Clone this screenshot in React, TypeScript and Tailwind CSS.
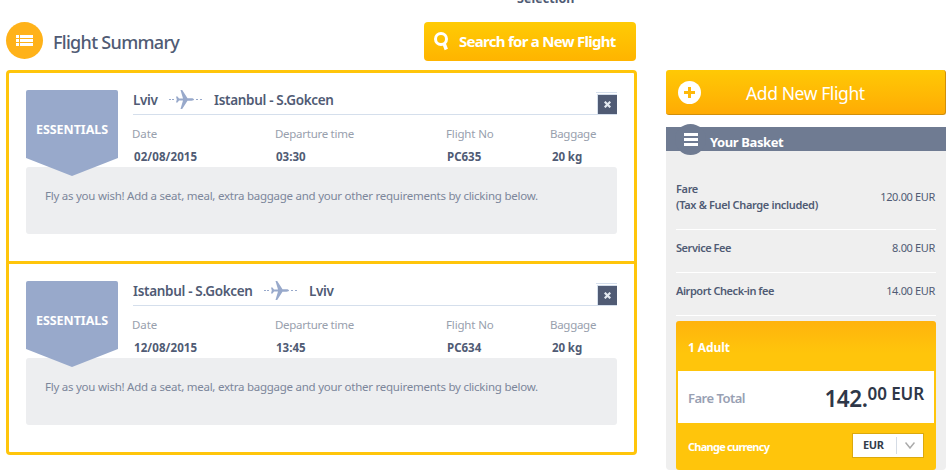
import React from 'react';

interface Flight {
  from: string;
  to: string;
  fromClass: string;
  date: string;
  time: string;
  flightNo: string;
  baggage: string;
}

const flights: Flight[] = [
  {
    from: 'Lviv',
    to: 'Istanbul - S.Gokcen',
    fromClass: 'w-[36px]',
    date: '02/08/2015',
    time: '03:30',
    flightNo: 'PC635',
    baggage: '20 kg',
  },
  {
    from: 'Istanbul - S.Gokcen',
    to: 'Lviv',
    fromClass: 'w-[131px]',
    date: '12/08/2015',
    time: '13:45',
    flightNo: 'PC634',
    baggage: '20 kg',
  },
];

const fees = [
  { label: 'Service Fee', amount: '8.00 EUR' },
  { label: 'Airport Check-in fee', amount: '14.00 EUR' },
];

const PlaneIcon: React.FC = () => (
  <svg width="34" height="20" viewBox="0 0 34 20" className="shrink-0" fill="#98a9cb">
    <path d="M0 9h2v1H0zM3 9h2v1H3zM27 9h2v1h-2zM31 9h2v1h-2z" />
    <path d="M7 6.500h1.500l1.500 2h4L11.500 0h1.700l5.300 8.300h4c1.500 0 2.500.6 2.500 1.200s-1 1.200-2.500 1.200h-4L13.200 19h-1.700L14 10.500h-4l-1.500 2H7l.8-3z" />
  </svg>
);

const Badge: React.FC = () => (
  <div className="absolute left-0 top-0 w-[92px] h-[86px]">
    <svg width="92" height="86" viewBox="0 0 92 86" className="block">
      <path d="M2 0h88a2 2 0 0 1 2 2v66L46 86 0 68V2a2 2 0 0 1 2-2z" fill="#98a9cb" />
    </svg>
    <span className="absolute inset-x-0 top-[30px] text-center text-[12.500px] leading-5 font-bold tracking-[-0.05px] text-white">
      ESSENTIALS
    </span>
  </div>
);

const FlightCard: React.FC<{ flight: Flight }> = ({ flight }) => (
  <div className="relative mx-[17px]">
    <div className="ml-[107px] h-[77px]">
      <div className="flex h-[25px] justify-between border-b border-[#d5dfec] text-[13.500px] leading-5 font-semibold tracking-[-0.32px] text-[#505b74]">
        <div className="flex">
          <span className={`${flight.fromClass} whitespace-nowrap`}>{flight.from}</span>
          <PlaneIcon />
          <span className="ml-[11px]">{flight.to}</span>
        </div>
        <div className="mt-[2px] h-[22px] w-[21px] border-t border-[#d5dfec] pt-px">
          <button className="ml-px flex h-[20px] w-[20px] items-center justify-center border-l border-t border-[#d5dfec] bg-[#505b74] bg-clip-padding">
            <svg width="7" height="7" viewBox="0 0 7 7" stroke="#e4eaf1" strokeWidth="2.200">
              <path d="M.7.7l5.600 5.600M6.300.7L.7 6.300" />
            </svg>
          </button>
        </div>
      </div>
      <div className="-ml-px mt-[9px] grid grid-cols-[143px_171px_104px_66px] text-[11.500px] leading-5 tracking-[-0.28px] text-[#98a0ad]">
        <span className="tracking-[-0.1px]">Date</span>
        <span>Departure time</span>
        <span className="tracking-[-0.15px]">Flight No</span>
        <span>Baggage</span>
      </div>
      <div className="mt-[3px] grid grid-cols-[143px_170px_105px_66px] text-[11.500px] leading-5 font-bold text-[#505b74]">
        <span className="pl-px tracking-[0.1px]">{flight.date}</span>
        <span>{flight.time}</span>
        <span className="pl-px">{flight.flightNo}</span>
        <span className="pl-px tracking-[-0.1px]">{flight.baggage}</span>
      </div>
    </div>
    <div className="h-[67px] rounded-[3px] bg-[#edeef0] pl-[19px] pt-[19px] text-[11.500px] leading-5 tracking-[-0.25px] text-[#7c869b]">
      Fly as you wish! Add a seat, meal, extra baggage and your other requirements by clicking below.
    </div>
    <Badge />
  </div>
);

const Basket: React.FC = () => (
  <section className="mt-[12px] h-[343px] w-[280px] rounded-b-[4px] bg-[#efefef] text-[#505b74]">
    <div className="relative h-6 bg-[#6f7b92]">
      <div className="absolute left-[9px] top-[-3px] flex h-[31px] w-[31px] items-center justify-center rounded-full bg-[#6f7b92]">
        <svg width="14" height="13" viewBox="0 0 14 13" fill="#fff">
          <path d="M0 0h14v3H0zM0 5h14v3H0zM0 10h14v3H0z" />
        </svg>
      </div>
      <h2 className="pl-[44px] pt-[5px] text-[13px] leading-5 font-bold tracking-[-0.4px] text-white">Your Basket</h2>
    </div>
    <div className="mx-[10px] text-[11px] tracking-[-0.35px]">
      <div className="flex h-[79px] items-center justify-between border-b border-white pt-[14px]">
        <div className="leading-4 font-semibold">
          Fare
          <br />
          (Tax &amp; Fuel Charge included)
        </div>
        <span className="pr-px">120.00 EUR</span>
      </div>
      {fees.map((fee) => (
        <div key={fee.label} className="flex h-[43px] items-center justify-between border-b border-white pb-[5px]">
          <span className="font-semibold tracking-[-0.45px]">{fee.label}</span>
          <span className="pr-px">{fee.amount}</span>
        </div>
      ))}
      <div className="mt-[5px] h-[149px] rounded-[3px] bg-linear-to-b from-[#ffb30d] to-[#ffc50b] to-[32px] px-[2px]">
        <div className="h-[50px] pl-[10px] pt-[17px] text-[12px] leading-5 font-bold tracking-[-0.1px] text-white">1 Adult</div>
        <div className="flex h-[52px] justify-between bg-white pl-[10px] pr-[10px]">
          <span className="pt-[17px] text-[13px] leading-5 font-semibold tracking-[-0.5px] text-[#98a0b3]">Fare Total</span>
          <div className="flex font-semibold text-[#2e3748]">
            <span className="pt-[14px] text-[22.500px] leading-7 tracking-[-0.4px]">142.</span>
            <span className="pt-[11px] text-[17px] leading-6 tracking-[-0.1px]">00 EUR</span>
          </div>
        </div>
        <div className="flex justify-between pl-[10px] pr-[10px] pt-[10px]">
          <span className="pt-[4px] text-[11px] leading-5 font-bold tracking-[-0.75px] text-white">Change currency</span>
          <div className="flex h-[25px] w-[72px] items-center border border-[#dba90d] bg-white">
            <span className="w-[43px] pl-[10px] text-[11px] font-bold tracking-[-0.4px] text-[#343d4b]">EUR</span>
            <span className="h-[17px] w-px bg-[#d5dce5]" />
            <svg width="10" height="7" viewBox="0 0 10 7" className="ml-[8px]" fill="none" stroke="#aaa" strokeWidth="1.500">
              <path d="M.5.5L5 6l4.500-5.500" />
            </svg>
          </div>
        </div>
      </div>
    </div>
  </section>
);

export default function App() {
  return (
    <div className="relative flex h-[475px] w-[952px] overflow-hidden bg-white font-['Noto_Sans','Open_Sans',sans-serif]">
      {/* tail of the step label scrolled past the top edge */}
      <div className="absolute left-[517px] top-[-11px] text-[12.500px] leading-5 font-bold tracking-[0.05px] text-[#505b74]">
        Selection
      </div>
      <main className="ml-[6px] w-[631px] pt-[22px]">
        <div className="flex h-[48px] justify-between pr-px">
          <div className="flex">
            <div className="flex h-[37px] w-[37px] items-center justify-center rounded-full bg-[#ffb219]">
              <svg width="17" height="11" viewBox="0 0 17 11" fill="#fff">
                <path d="M0 0h3v3H0zM4 0h13v3H4zM0 4h3v3H0zM4 4h13v3H4zM0 8h3v3H0zM4 8h13v3H4z" />
              </svg>
            </div>
            <h1 className="ml-[10px] pt-[8px] text-[18px] leading-6 font-medium tracking-[-0.7px] text-[#505b74]">Flight Summary</h1>
          </div>
          <button className="flex h-[39px] w-[212px] rounded-[4px] bg-linear-to-b from-[#ffcb04] to-[#ffb400] pl-[10px] text-white">
            <svg width="15" height="19" viewBox="0 0 15 19" className="mt-[10px]" fill="none" stroke="#fff">
              <circle cx="7" cy="7" r="5.500" strokeWidth="3" />
              <path d="M10 11.500L12.300 17.500" strokeWidth="3.500" />
            </svg>
            <span className="ml-[10px] whitespace-nowrap pt-[7px] text-[15px] leading-6 font-bold tracking-[-0.72px]">
              Search for a New Flight
            </span>
          </button>
        </div>
        <div className="h-[385px] rounded-[4px] border-[3px] border-[#ffc50b]">
          <div className="h-[191px] border-b-[3px] border-[#ffc50b] pt-[17px]">
            <FlightCard flight={flights[0]} />
          </div>
          <div className="pt-[17px]">
            <FlightCard flight={flights[1]} />
          </div>
        </div>
      </main>
      <aside className="ml-[29px] pt-[70px]">
        <button className="flex h-[45px] w-[280px] rounded-[3px] border-b border-r border-[#d18f0b] bg-linear-to-b from-[#ffc905] to-[#ffab04] pl-[12px] pt-[11px] text-white">
          <svg width="23" height="23" viewBox="0 0 23 23">
            <circle cx="11.500" cy="11.500" r="11.500" fill="#fff" />
            <path d="M10 6h3v4h4v3h-4v4h-3v-4H6v-3h4z" fill="#ffb908" />
          </svg>
          <span className="ml-[45px] text-[17.500px] leading-6 tracking-[-0.4px]">Add New Flight</span>
        </button>
        <Basket />
      </aside>
    </div>
  );
}
